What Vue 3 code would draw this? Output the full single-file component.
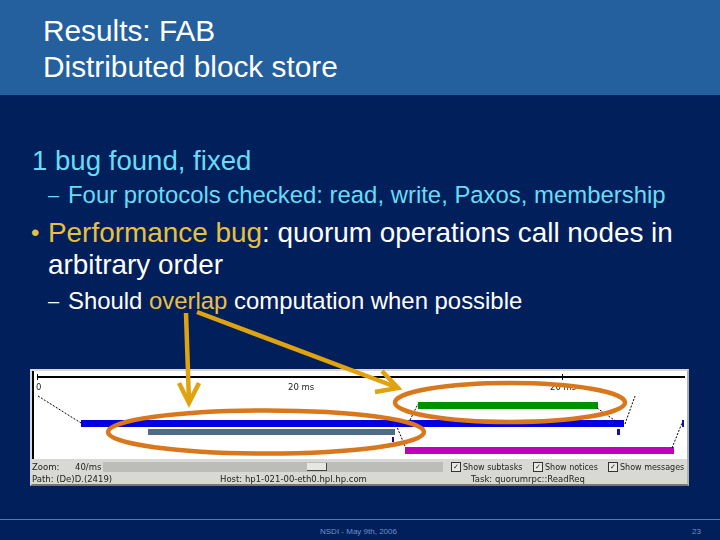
<script setup>
const bars = [
  { cls: 'bar', l: 47, t: 49, w: 543, h: 7, c: '#0000e0' },
  { cls: 'bar', l: 114, t: 58, w: 247, h: 6, c: '#4f6b85' },
  { cls: 'bar', l: 384, t: 31, w: 180, h: 7, c: '#009000' },
  { cls: 'bar', l: 371, t: 76, w: 269, h: 7, c: '#c000c0' },
  { cls: 'bar', l: 583, t: 58, w: 3, h: 6, c: '#1010a8' },
  { cls: 'bar', l: 358, t: 66, w: 2, h: 5, c: '#1010a8' },
  { cls: 'bar', l: 648, t: 49, w: 2, h: 7, c: '#1010a8' }
]
const links = [
  [4, 25, 47, 52], [371, 75, 363, 56], [376, 49, 384, 33], [563, 37, 583, 51],
  [591, 53, 601, 25], [638, 77, 648, 52]
]
</script>

<template>
  <div class="slide">
    <header class="head">
      <h1>Results: FAB<br>Distributed block store</h1>
    </header>
    <main class="body">
      <p class="l1 cyan nomark">1 bug found, fixed</p>
      <div class="row sub cyan"><span class="dash">–</span><span>Four protocols checked: read, write, Paxos, membership</span></div>
      <div class="row l1 white"><span class="dot">•</span><span><b class="gold">Performance bug</b>: quorum operations call nodes in<br>arbitrary order</span></div>
      <div class="row sub white"><span class="dash">–</span><span>Should <b class="gold">overlap</b> computation when possible</span></div>
      <section class="shot">
        <div class="canvas">
          <i class="axis"></i>
          <i class="tick t0"></i>
          <i class="tick t1"></i>
          <span class="mark m0">0</span>
          <span class="mark m1">20 ms</span>
          <span class="mark m2">20 ms</span>
          <i v-for="(b, i) in bars" :key="i" class="bar" :style="{ left: b.l + 'px', top: b.t + 'px', width: b.w + 'px', height: b.h + 'px', background: b.c }"></i>
          <svg class="links" viewBox="0 0 654 88" width="654" height="88">
            <line v-for="(k, i) in links" :key="i" :x1="k[0]" :y1="k[1]" :x2="k[2]" :y2="k[3]" stroke="#000" stroke-width="1" stroke-dasharray="2 1.5" />
          </svg>
        </div>
        <div class="ctl">
          <span class="c-zoom">Zoom:</span>
          <span class="c-val">40/ms</span>
          <div class="track"><i class="thumb"></i></div>
          <label class="chk c1"><i class="box">✓</i>Show subtasks</label>
          <label class="chk c2"><i class="box">✓</i>Show notices</label>
          <label class="chk"><i class="box">✓</i>Show messages</label>
        </div>
        <div class="info">
          <span class="i-path">Path: (De)D.(2419)</span>
          <span class="i-host">Host: hp1-021-00-eth0.hpl.hp.com</span>
          <span>Task: quorumrpc::ReadReq</span>
        </div>
      </section>
    </main>
    <footer class="foot">
      <span class="f-mid">NSDI - May 9th, 2006</span>
      <span class="f-num">23</span>
    </footer>
    <svg class="over" viewBox="0 0 720 540" width="720" height="540">
      <g fill="none" stroke="#d9771c" stroke-width="4.5">
        <ellipse cx="266" cy="432" rx="158" ry="21.5" />
        <ellipse cx="510" cy="402.5" rx="115" ry="19.5" />
      </g>
      <g fill="none" stroke="#e0a30f" stroke-width="4.5">
        <path d="M186 313 L189 402" />
        <path d="M179 383 L189 403 L199 383" />
        <path d="M197 312 L396 387" />
        <path d="M382 371 L398 388 L375 392" />
      </g>
    </svg>
  </div>
</template>

<style>
html, body { margin: 0; padding: 0; background: #001f5b; }
</style>

<style scoped>
.slide {
  position: relative;
  width: 720px;
  height: 540px;
  overflow: hidden;
  display: flex;
  flex-direction: column;
  background: #001f5b;
  font-family: "Liberation Sans", Arial, sans-serif;
}
.head {
  height: 95px;
  flex: none;
  box-sizing: border-box;
  padding: 13px 0 0 43px;
  background: #24609e;
}
h1 {
  margin: 0;
  font-weight: 400;
  font-size: 29.8px;
  line-height: 36px;
  color: #fff;
}
.body {
  flex: 1;
  box-sizing: border-box;
  padding: 49px 0 0 32px;
  display: flex;
  flex-direction: column;
}
.l1 {
  font-size: 27.9px;
  line-height: 32px;
  margin: 0;
}
.nomark { font-size: 27.6px; line-height: 33px; }
.row { display: flex; }
.sub {
  font-size: 23.9px;
  line-height: 30px;
  padding-left: 16px;
}
.row.l1 { margin-top: 7px; }
.row.sub.white { margin-top: 5px; }
.row.sub.cyan { margin-top: 3px; }
.dash { width: 20px; flex: none; font-size: 20px; color: inherit; }
.dot { width: 16px; flex: none; font-size: 24px; margin-left: -1px; margin-right: 1px; color: #e8c040; }
.cyan { color: #66ddf5; }
.white { color: #fff; }
.gold { font-weight: 400; color: #e8c040; }
.shot {
  margin: 53px 0 0 -2px;
  width: 659px;
  height: 117px;
  box-sizing: border-box;
  border: 2px solid #d8d8d4;
  border-right-color: #b0b0ac;
  border-bottom-color: #777;
  background: #d8d8d4;
  font-family: "DejaVu Sans", sans-serif;
  font-size: 8.5px;
  color: #222;
  flex: none;
}
.canvas {
  position: relative;
  height: 88px;
  background: #fff;
  border-left: 2px solid #000;
  overflow: hidden;
  filter: blur(0.3px);
}
.axis { position: absolute; left: 3px; right: 2px; top: 5px; height: 2px; background: #000; }
.tick { position: absolute; top: 3px; width: 1px; height: 6px; background: #000; }
.t0 { left: 3px; }
.t1 { left: 528px; }
.mark { position: absolute; top: 11px; font-size: 8.5px; color: #222; }
.m0 { left: 2px; }
.m1 { left: 254px; }
.m2 { left: 516px; }
.bar { position: absolute; display: block; }
.links { position: absolute; left: 0; top: 0; }
.ctl {
  height: 10px;
  margin-top: 3px;
  display: flex;
  align-items: center;
  filter: blur(0.35px);
}
.c-zoom { width: 43px; flex: none; }
.c-val { width: 28px; flex: none; }
.track {
  position: relative;
  flex: none;
  width: 340px;
  height: 10px;
  background: #bcbcb8;
  margin-right: 8px;
}
.thumb {
  position: absolute;
  left: 204px;
  top: 1px;
  width: 20px;
  height: 8px;
  background: #e6e6e2;
  border-right: 1px solid #444;
  border-bottom: 1px solid #444;
  box-sizing: border-box;
}
.chk { display: flex; align-items: center; gap: 2px; flex: none; white-space: nowrap; font-size: 8px; }
.c1 { width: 82px; }
.c2 { width: 75px; }
.box {
  width: 8px;
  height: 8px;
  border: 1px solid #333;
  background: #e8e8e4;
  font-style: normal;
  font-size: 7px;
  line-height: 8px;
  text-align: center;
}
.info {
  height: 12px;
  padding-top: 2px;
  box-sizing: border-box;
  display: flex;
  align-items: center;
  filter: blur(0.35px);
}
.i-path { width: 188px; }
.i-host { width: 251px; }
.foot {
  height: 21px;
  flex: none;
  position: relative;
  border-top: 1px solid #4a78b8;
  font-size: 8px;
  color: #6f92cc;
  display: flex;
  align-items: center;
  padding-top: 3px;
  box-sizing: border-box;
}
.f-mid { margin-left: 320px; }
.f-num { margin-left: auto; margin-right: 19px; }
.over { position: absolute; left: 0; top: 0; pointer-events: none; }
</style>
